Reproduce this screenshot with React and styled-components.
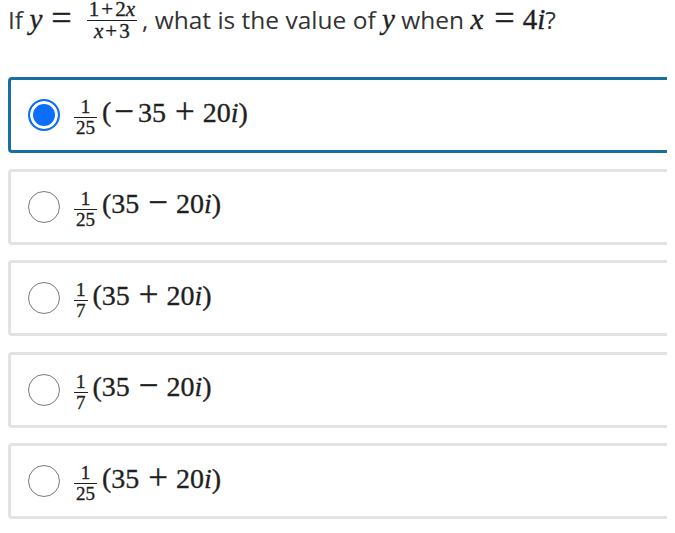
import React from 'react';
import styled, { createGlobalStyle } from 'styled-components';

const GlobalStyle = createGlobalStyle`
  html {
    overflow: hidden;
  }
  body {
    margin: 0 8px;
    background: #fff;
    font-family: "Open Sans", "Liberation Sans", sans-serif;
  }
`;

const Page = styled.div`
  display: flex;
  flex-direction: column;
`;

const Question = styled.p`
  margin: 0;
  height: 44px;
  font-size: 24.5px;
  line-height: 35px;
  color: #333;
  white-space: pre;
`;

const MathText = styled.span`
  font-family: "Liberation Serif", "DejaVu Serif", serif;
  font-size: ${({ $size }) => $size}px;
  color: #1f1f1f;
  white-space: nowrap;
  -webkit-text-stroke: 0.35px #1f1f1f;
`;

const Var = styled.i`
  font-style: italic;
`;

/* operators are drawn a bit larger than the digits, like the TeX + − = */
const Op = styled.span`
  font-size: 1.25em;
  line-height: 1;
  vertical-align: -0.04em;
  margin: ${({ $m }) => $m};
`;

const FracOp = styled.span`
  margin: 0 2px;
`;

const Frac = styled.span`
  display: inline-flex;
  flex-direction: column;
  align-items: center;
  vertical-align: ${({ $raise }) => $raise}px;
  font-size: ${({ $size }) => $size}px;
  line-height: 0.85;
  margin: 0 ${({ $gap }) => $gap}px;
`;

const Num = styled.span`
  padding: 0 2px 2px;
`;

const Den = styled.span`
  align-self: stretch;
  text-align: center;
  border-top: 1px solid #1f1f1f;
  padding: 2px 2px 0;
`;

const Options = styled.div`
  display: flex;
  flex-direction: column;
  gap: 15.5px;
  margin-top: 33px;
  margin-right: -24px;
`;

const Card = styled.label`
  box-sizing: border-box;
  height: 76px;
  display: flex;
  align-items: center;
  gap: 12px;
  padding-left: 17px;
  border: 3px solid ${({ $selected }) => ($selected ? '#1b6ea3' : '#e3e3e3')};
  border-radius: 4px;
  background: #fff;
`;

const Radio = styled.span`
  box-sizing: border-box;
  flex: none;
  width: 32px;
  height: 32px;
  border-radius: 50%;
  border: ${({ $selected }) => ($selected ? '2px solid #0d6efd' : '1.5px solid #7a7a7a')};
  background: ${({ $selected }) => ($selected ? '#0d6efd' : '#fff')};
  box-shadow: ${({ $selected }) => ($selected ? 'inset 0 0 0 3px #fff' : 'none')};
`;

const Answer = styled(MathText)`
  line-height: 1.2;
`;

const Paren = styled.span`
  margin-left: 3px;
`;

const options = [
  { den: '25', neg: true, op: '+', selected: true },
  { den: '25', neg: false, op: '−' },
  { den: '7', neg: false, op: '+' },
  { den: '7', neg: false, op: '−' },
  { den: '25', neg: false, op: '+' },
];

export default function App() {
  return (
    <Page>
      <GlobalStyle />
      <Question>
        {'If '}
        <MathText $size={29}>
          <Var>y</Var>
          <Op $m="0 10px 0 9px">=</Op>
          <Frac $size={21} $gap={5} $raise={13}>
            <Num>
              1<FracOp>+</FracOp>2<Var>x</Var>
            </Num>
            <Den>
              <Var>x</Var>
              <FracOp>+</FracOp>3
            </Den>
          </Frac>
        </MathText>
        {', what is the value of '}
        <MathText $size={29}>
          <Var>y</Var>
        </MathText>
        {' when '}
        <MathText $size={29}>
          <Var>x</Var>
          <Op $m="0 8px 0 11px">=</Op>4<Var>i</Var>
        </MathText>
        ?
      </Question>
      <Options>
        {options.map((o, i) => (
          <Card key={i} $selected={o.selected}>
            <Radio $selected={o.selected} />
            <Answer $size={28}>
              <Frac $size={19} $gap={2} $raise={8}>
                <Num>1</Num>
                <Den>{o.den}</Den>
              </Frac>
              <Paren>(</Paren>
              {o.neg ? <Op $m="0 4px 0 3px">−</Op> : null}35
              <Op $m="0 8px 0 9px">{o.op}</Op>20<Var>i</Var>)
            </Answer>
          </Card>
        ))}
      </Options>
    </Page>
  );
}
